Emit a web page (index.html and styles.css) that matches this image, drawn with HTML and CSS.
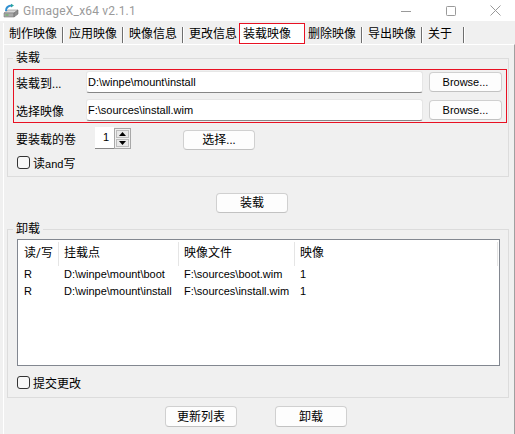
FILE: index.html
```html
<!DOCTYPE html>
<html lang="zh-CN">
<head>
<meta charset="utf-8">
<title>GImageX_x64 v2.1.1</title>
<link rel="stylesheet" href="styles.css">
</head>
<body>
<div class="titlebar">
  <svg class="app-icon" viewBox="0 0 16 16" width="16" height="16">
    <polygon points="1,10 11,10 15,7 5,7" fill="#d8d8d8" stroke="#8c8c8c" stroke-width="0.6"/>
    <polygon points="1,10 11,10 11,14 1,14" fill="#a9a9a9" stroke="#7c7c7c" stroke-width="0.6"/>
    <polygon points="11,10 15,7 15,11 11,14" fill="#8e8e8e" stroke="#6f6f6f" stroke-width="0.6"/>
    <rect x="2.5" y="11.5" width="3" height="1" fill="#5fb85a"/>
    <path d="M3 8 C3 4 5 2.5 9 2.5" fill="none" stroke="#2f8fd0" stroke-width="2"/>
    <path d="M8 0.8 L11 2.6 L8 4.4 Z" fill="#2aa3a0"/>
  </svg>
  <span class="title">GImageX_x64 v2.1.1</span>
  <div class="caption-buttons">
    <span class="cap"><svg width="10" height="10" viewBox="0 0 10 10"><line x1="0" y1="5.5" x2="10" y2="5.5" stroke="#9a9a9a" stroke-width="1"/></svg></span>
    <span class="cap"><svg width="10" height="10" viewBox="0 0 10 10"><rect x="0.5" y="0.5" width="9" height="9" rx="0.8" fill="none" stroke="#9a9a9a" stroke-width="1"/></svg></span>
    <span class="cap"><svg width="11" height="11" viewBox="0 0 11 11"><path d="M0.5 0.5 L10.5 10.5 M10.5 0.5 L0.5 10.5" stroke="#9a9a9a" stroke-width="1"/></svg></span>
  </div>
</div>
<div class="client">
  <div class="tabs">
    <div class="tab">制作映像</div>
    <div class="tab">应用映像</div>
    <div class="tab">映像信息</div>
    <div class="tab">更改信息</div>
    <div class="tab tab-active">装载映像</div>
    <div class="tab">删除映像</div>
    <div class="tab">导出映像</div>
    <div class="tab tab-wide">关于</div>
  </div>
  <div class="page">
    <div class="group">
      <div class="legend">装载</div>
      <div class="highlight">
        <div class="field-row">
          <span class="field-label">装载到...</span>
          <div class="textbox">D:\winpe\mount\install</div>
          <button class="btn btn-browse">Browse...</button>
        </div>
        <div class="field-row">
          <span class="field-label">选择映像</span>
          <div class="textbox">F:\sources\install.wim</div>
          <button class="btn btn-browse">Browse...</button>
        </div>
      </div>
      <div class="volume-row">
        <span class="volume-label">要装载的卷</span>
        <div class="spin-text">1</div>
        <div class="spin-buttons">
          <span class="spin-btn"><svg width="7" height="4" viewBox="0 0 7 4"><polygon points="0,4 7,4 3.5,0" fill="#000"/></svg></span>
          <span class="spin-btn"><svg width="7" height="4" viewBox="0 0 7 4"><polygon points="0,0 7,0 3.5,4" fill="#000"/></svg></span>
        </div>
        <button class="btn btn-select">选择...</button>
      </div>
      <div class="check-row"><span class="checkbox"></span><span class="check-text">读<span class="latin">and</span>写</span></div>
    </div>
    <div class="mount-row"><button class="btn btn-main">装载</button></div>
    <div class="group group-unmount">
      <div class="legend">卸载</div>
      <div class="listview">
        <div class="lv-grid lv-header">
          <div class="lv-cell first">读/写</div>
          <div class="lv-cell">挂载点</div>
          <div class="lv-cell">映像文件</div>
          <div class="lv-cell">映像</div>
        </div>
        <div class="lv-grid lv-row">
          <div class="lv-cell first">R</div>
          <div class="lv-cell">D:\winpe\mount\boot</div>
          <div class="lv-cell">F:\sources\boot.wim</div>
          <div class="lv-cell">1</div>
        </div>
        <div class="lv-grid lv-row">
          <div class="lv-cell first">R</div>
          <div class="lv-cell">D:\winpe\mount\install</div>
          <div class="lv-cell">F:\sources\install.wim</div>
          <div class="lv-cell">1</div>
        </div>
      </div>
      <div class="check-row"><span class="checkbox"></span><span class="check-text">提交更改</span></div>
    </div>
    <div class="bottom-row">
      <button class="btn btn-main">更新列表</button>
      <button class="btn btn-main">卸载</button>
    </div>
  </div>
</div>
</body>
</html>
```
FILE: styles.css
```css
*, *::before, *::after { box-sizing: border-box; }
html, body { margin: 0; padding: 0; }
body {
  width: 515px;
  height: 434px;
  overflow: hidden;
  background: #f0f0f0;
  font-family: Roboto, "Noto Sans CJK SC", sans-serif;
  font-size: 12px;
  color: #000;
}

/* Latin-only texts use a narrower face, like the original UI font */
.textbox,
.btn-browse,
.spin-text,
.lv-row .lv-cell,
.latin {
  font-family: "Liberation Sans", "Noto Sans CJK SC", sans-serif;
  font-size: 11px;
}

/* title bar */
.titlebar {
  height: 21px;
  background: #fff;
  display: flex;
  align-items: center;
}
.app-icon { margin-left: 3px; flex: none; }
.title {
  margin-left: 4px;
  color: #9a9a9a;
  line-height: 16px;
  letter-spacing: 0.2px;
}
.caption-buttons {
  margin-left: auto;
  margin-right: -3px;
  display: flex;
  height: 21px;
}
.cap {
  width: 45px;
  display: flex;
  align-items: center;
  justify-content: center;
}

/* tabs */
.client { padding-left: 3px; }
.tabs {
  height: 23px;
  display: flex;
  align-items: flex-end;
}
.tab {
  height: 21px;
  display: flex;
  align-items: center;
  padding-left: 5px;
  padding-top: 1px;
  white-space: nowrap;
  line-height: 12px;
}
.tab::after {
  content: "";
  align-self: flex-end;
  width: 2px;
  height: 16px;
  margin-left: 5px;
  margin-bottom: 1px;
  border-left: 1px solid #6e6e6e;
  border-right: 1px solid #ffffff;
}
.tab:first-child { border-left: 1px solid #fff; }
.tab-wide::after { margin-left: 11px; }
.tab-active {
  margin-left: -5px;
  margin-right: -2px;
  border: 1px solid #e81123;
  background: #fff;
  padding: 1px 13px 0 3px;
}
.tab-active::after { display: none; }

/* page */
.page {
  height: 390px;
  border-top: 1px solid #fff;
  border-left: 1px solid #fff;
  border-right: 1px solid #a0a0a0;
  padding: 13px 5px 0 3px;
}
.group {
  border: 1px solid #dcdcdc;
  padding-bottom: 6px;
  display: flex;
  flex-direction: column;
}
.legend {
  margin-top: -7px;
  margin-left: 5px;
  padding: 0 3px;
  height: 12px;
  line-height: 12px;
  background: #f0f0f0;
  align-self: flex-start;
}
.highlight {
  margin: 5px 1px 0 5px;
  border: 1px solid #e81123;
  padding: 1px 3px 1px 2px;
  display: flex;
  flex-direction: column;
  gap: 6px;
}
.field-row {
  height: 22px;
  display: flex;
  align-items: center;
}
.field-label { width: 70px; flex: none; }
.textbox {
  width: 337px;
  height: 22px;
  flex: none;
  background: #fff;
  border: 1px solid #e6e6e6;
  border-bottom-color: #868686;
  border-radius: 3px;
  padding-left: 1px;
  line-height: 20px;
  white-space: nowrap;
}
.btn {
  font-family: inherit;
  font-size: 12px;
  color: #000;
  background: #fdfdfd;
  border: 1px solid #d0d0d0;
  border-bottom-color: #c2c2c2;
  border-radius: 4px;
  padding: 0;
  margin: 0;
  line-height: 18px;
  display: flex;
  align-items: center;
  justify-content: center;
}
.btn.btn-browse {
  width: 73px;
  height: 20px;
  margin-left: 6px;
  font-family: "Liberation Sans", sans-serif;
  font-size: 11px;
}

.volume-row {
  margin: 4px 0 0 8px;
  height: 22px;
  display: flex;
  align-items: center;
}
.volume-label { width: 79px; flex: none; }
.spin-text {
  width: 19px;
  height: 22px;
  background: #fff;
  border-bottom: 1px solid #868686;
  text-align: right;
  padding-right: 5px;
  line-height: 21px;
}
.spin-buttons {
  width: 17px;
  height: 21px;
  border: 1px solid #a8a8a8;
  display: flex;
  flex-direction: column;
  gap: 1px;
  padding: 1px;
  background: #f0f0f0;
}
.spin-btn {
  flex: 1;
  background: #e8e8e8;
  border: 1px solid #bcbcbc;
  display: flex;
  align-items: center;
  justify-content: center;
}
.btn-select {
  width: 72px;
  height: 20px;
  margin-left: 52px;
  align-self: flex-start;
  margin-top: 3px;
}

.check-row {
  margin: 5px 0 0 9px;
  height: 16px;
  display: flex;
  align-items: center;
}
.checkbox {
  width: 13px;
  height: 13px;
  border: 1px solid #333;
  border-radius: 3px;
  background: #f7f7f7;
  flex: none;
}
.check-text { margin-left: 3px; }

.mount-row {
  margin-top: 16px;
  padding-left: 209px;
  display: flex;
}
.btn-main { width: 72px; height: 20px; }

/* unmount */
.group-unmount { margin-top: 16px; padding-bottom: 7px; }
.listview {
  margin: 4px 0 0 9px;
  width: 483px;
  height: 127px;
  background: #fff;
  border: 1px solid #828790;
}
.lv-grid {
  display: grid;
  grid-template-columns: 41px 120px 116px 203px;
}
.lv-header { height: 26px; }
.lv-header .lv-cell {
  margin-top: 2px;
  height: 24px;
  line-height: 22px;
  border-right: 1px solid #e5e5e5;
}
.lv-row { height: 17px; }
.lv-row .lv-cell { line-height: 17px; }
.lv-cell { padding-left: 5px; white-space: nowrap; overflow: hidden; }
.lv-cell.first { padding-left: 6px; }
.group-unmount .check-row { margin-top: 8px; }

.bottom-row {
  margin-top: 8px;
  padding-left: 158px;
  display: flex;
  gap: 38px;
}
.bottom-row .btn-main { height: 21px; }
```
